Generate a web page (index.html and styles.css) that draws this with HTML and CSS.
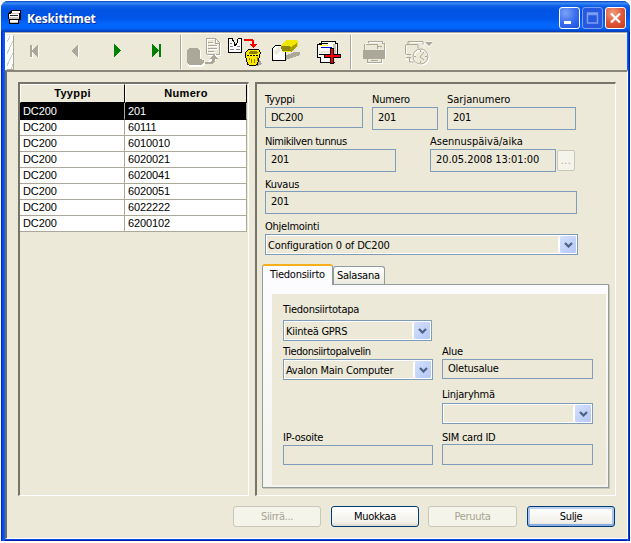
FILE: index.html
```html
<!DOCTYPE html>
<html lang="fi">
<head>
<meta charset="utf-8">
<title>Keskittimet</title>
<link rel="stylesheet" href="styles.css">
</head>
<body>
<div class="window">
  <header class="titlebar">
    <svg class="app-icon" width="14" height="16" viewBox="8 9 14 16" shape-rendering="crispEdges">
      <path d="M11 10h10v10h-2v4h-10v-5h-1v-6h1z" fill="#000"/>
      <path d="M12 11h8v2h-8zM9 14h10v5h-10zM10 20h8v3h-8z" fill="#fff"/>
      <path d="M11 13h8v1h-8zM9 17h10v2h-10zM10 22h8v1h-8z" fill="#c9c5b8"/>
      <path d="M10 15h8v1h-8z" fill="#223"/>
    </svg>
    <h1>Keskittimet</h1>
    <div class="caption-buttons">
      <span class="cap"><svg width="19" height="20"><path d="M4 13h7v3h-7z" fill="#fff"/></svg></span>
      <span class="cap max"><svg width="19" height="20"><path d="M4.500 5h10v10h-10zM4.500 6.500h10" fill="none" stroke="#7d9df2" stroke-width="1.500"/></svg></span>
      <span class="cap close"><svg width="19" height="20"><path d="M5 5.500l9 9M14 5.500l-9 9" stroke="#fff" stroke-width="2.200"/></svg></span>
    </div>
  </header>
  <div class="toolbar">
    <span class="grip"></span>
    <svg class="t-first" width="9" height="13" viewBox="0 0 9 13" shape-rendering="crispEdges"><path d="M1 1h2v12h-2zM9 0v13l-6-6z" fill="#fff"/><path d="M0 0h2v12h-2zM8 -1v14l-7-7z" fill="#aca899"/></svg>
    <svg class="t-prev" width="9" height="13" viewBox="0 0 9 13" shape-rendering="crispEdges"><path d="M8 0v13l-7-6z" fill="#fff"/><path d="M7 -1v14l-7-7z" fill="#aca899"/></svg>
    <svg class="t-next" width="9" height="13" viewBox="0 0 9 13" shape-rendering="crispEdges"><path d="M0 0v13l7-6.500z" fill="#008000"/></svg>
    <svg class="t-last" width="9" height="13" viewBox="0 0 9 13" shape-rendering="crispEdges"><path d="M0 0v13l7-6.500zM7 0h2v13h-2z" fill="#008000"/></svg>
    <span class="sep s1"></span>
    <svg class="t-move" width="36" height="32" viewBox="186 36 36 32" shape-rendering="crispEdges">
      <path d="M188 50l3-2h8l2 2v8l4 1v5l-3 2h-13l-1-2z" fill="#fff"/>
      <path d="M187 49l3-2h7l3 2v9l4 1v3l-3 2h-12l-2-2z" fill="#aca899"/>
      <path d="M207 38h10l4 4v13h-14z" fill="#ece9d8"/>
      <path d="M207.500 54v-15.500h9l4 4v11.500h-13M216.500 38v5h4M209 42.500h5M209 45.500h9M209 48.500h9M209 51.500h6" fill="none" stroke="#fff"/>
      <path d="M206.500 53v-15.500h9l4 4v11.500h-13M215.500 37v5h4M208 41.500h5M208 44.500h9M208 47.500h9M208 50.500h6" fill="none" stroke="#aca899"/>
      <path d="M206 63h6l4-3v-3h3l-4-4z" fill="#fff"/>
      <path d="M205 61h5l2-1v-2h-3l4-4h1l4 4h-3v3l-3 2h-7z" fill="#aca899"/>
    </svg>
    <svg class="t-delete" width="36" height="32" viewBox="227 36 36 32" shape-rendering="crispEdges">
      <path d="M228.500 37.500h4l3 3 3-3h3v14h-13z" fill="#fff" stroke="#000"/>
      <path d="M232 38l2 3 1 4 2-3 1-4" fill="#ece9d8" stroke="#000"/>
      <path d="M230 42.500h2M230 45.500h3M237 45.500h3M230 48.500h4M236 48.500h4" stroke="#888"/>
      <path d="M244 38h8l2 2v3h3l-4 4-4-4h3v-2l-1-1h-7z" fill="#f00"/>
      <path d="M258 56l4 7-4 2h-8z" fill="#aca899"/>
      <path d="M245.500 51.500l3-3h10l2 3-1 3-2 9-3 1h-4l-3-1-2-9z" fill="#ffe800" stroke="#000"/>
      <path d="M248 52l2-2h7l1 2-2 1h-6z" fill="#8a8000"/>
      <path d="M249.500 57v2M251.500 58v4M254.500 58v4M257 56v4" stroke="#8a8000"/>
      <path d="M247 54.500h12" stroke="#000" stroke-dasharray="2 1"/>
    </svg>
    <svg class="t-clear" width="30" height="28" viewBox="271 38 30 28" shape-rendering="crispEdges">
      <path d="M285 55l9-4h6v3l-14 5z" fill="#aca899"/>
      <path d="M272.500 47.500l3-3h5l5 6v9h-13z" fill="#fff" stroke="#000"/>
      <path d="M273 51l6-5h3v2l-6 6z" fill="#ece9d8"/>
      <path d="M286 39h10l2 2v4l-7 6h-8l-2-6z" fill="#f0e600"/>
      <path d="M281 45h9l2 5h-10z" fill="#8f8708"/><path d="M297 42v4l-6 5-1-4z" fill="#a89e00"/>
    </svg>
    <svg class="t-add" width="25" height="25" viewBox="316 39 25 25" shape-rendering="crispEdges">
      <path d="M321 40.500h14l2 2v13l-3 2v4h-14v-5h-3v-11z" fill="#fff"/>
      <path d="M321 41.500v-1h14v2h2v12M317.500 43v13h3v5h14M318 43h3v-2M319 53.500h12M319 42.500h9" fill="none" stroke="#000"/>
      <path d="M333 43h3v11h-3z" fill="#c9c5b8"/><path d="M319 50h12v2h-12z" fill="#ece9d8"/>
      <path d="M320 44h8v1h-8z" fill="#ffff30"/><path d="M321 46h11v1h-11z" fill="#0000e0"/>
      <path d="M330 47h4v6h7v4h-7v6h-4v-6h-6v-4h6z" fill="#000"/><path d="M331 48h2v6h7v2h-7v6h-2v-6h-6v-2h6z" fill="#f00"/>
    </svg>
    <span class="sep s2"></span>
    <svg class="t-print" width="24" height="25" viewBox="362 39 24 25" shape-rendering="crispEdges">
      <path d="M369 41.500h14l2 2v14h-3v5h-15v-6h-3v-12z" fill="#ece9d8" stroke="#fff"/>
      <path d="M368 42v-1.500h14v2h2v14M364.500 43v13M367.500 57v4h14v-4M366 43.500h11v4M371 59.500h7M377 45.500h5" fill="none" stroke="#aca899"/>
      <path d="M363 49h22v9h-22z" fill="#aca899"/>
    </svg>
    <svg class="t-clock" width="30" height="26" viewBox="404 39 30 26">
      <path d="M411 41.500h13v5M406.500 45v14h5v4M425 41h8l-4 5z" fill="none" stroke="#fff"/>
      <path d="M408 43v-2.500h15v3M405.500 44v9M406 43.500h12v4M406 53.500h5M406 56.500h5M409.500 57v4h4" fill="none" stroke="#aca899"/>
      <path d="M425 41h8l-4 4z" fill="#aca899"/>
      <circle cx="421.500" cy="56.500" r="7.500" fill="#ece9d8" stroke="#fff" stroke-width="1.500"/>
      <circle cx="420.500" cy="55.500" r="7.500" fill="none" stroke="#aca899"/>
      <path d="M424 51l-4 5 4 3M414 55.500h2M425 55.500h2M420.500 49v2M420.500 60v2" fill="none" stroke="#aca899"/>
    </svg>
  </div>
  <main class="client">
    <div class="panels">
      <section class="panel list">
        <table>
          <thead><tr><th>Tyyppi</th><th>Numero</th></tr></thead>
          <tbody>
            <tr class="selected"><td>DC200</td><td>201</td></tr>
            <tr><td>DC200</td><td>60111</td></tr>
            <tr><td>DC200</td><td>6010010</td></tr>
            <tr><td>DC200</td><td>6020021</td></tr>
            <tr><td>DC200</td><td>6020041</td></tr>
            <tr><td>DC200</td><td>6020051</td></tr>
            <tr><td>DC200</td><td>6022222</td></tr>
            <tr><td>DC200</td><td>6200102</td></tr>
          </tbody>
        </table>
      </section>
      <section class="panel details">
        <div class="row r1">
          <div class="field w-type"><label>Tyyppi</label><div class="box short">DC200</div></div>
          <div class="field w-num"><label>Numero</label><div class="box">201</div></div>
          <div class="field w-serial"><label class="loose">Sarjanumero</label><div class="box">201</div></div>
        </div>
        <div class="row r2">
          <div class="field w-plate"><label class="tight">Nimikilven tunnus</label><div class="box">201</div></div>
          <div class="field w-date"><label class="loose">Asennuspäivä/aika</label><div class="box wide-text">20.05.2008 13:01:00</div></div>
          <span class="dots">...</span>
        </div>
        <div class="row r3">
          <div class="field w-desc"><label>Kuvaus</label><div class="box">201</div></div>
        </div>
        <div class="row r4">
          <div class="field w-conf"><label>Ohjelmointi</label><div class="combo"><span class="conf">Configuration 0 of DC200</span><i><svg width="9" height="6"><path d="M1 1l3.500 3.500L8 1" /></svg></i></div></div>
        </div>
        <div class="tabs"><span class="tab active">Tiedonsiirto</span><span class="tab">Salasana</span></div>
        <div class="tabpane">
          <div class="sheet">
            <div class="field w-method"><label>Tiedonsiirtotapa</label><div class="combo"><span>Kiinteä GPRS</span><i><svg width="9" height="6"><path d="M1 1l3.500 3.500L8 1" /></svg></i></div></div>
            <div class="row r6">
              <div class="field w-left"><label class="tight">Tiedonsiirtopalvelin</label><div class="combo"><span>Avalon Main Computer</span><i><svg width="9" height="6"><path d="M1 1l3.500 3.500L8 1" /></svg></i></div></div>
              <div class="field w-right"><label>Alue</label><div class="box area">Oletusalue</div></div>
            </div>
            <div class="row r7">
              <div class="field w-right"><label>Linjaryhmä</label><div class="combo"><span></span><i><svg width="9" height="6"><path d="M1 1l3.500 3.500L8 1" /></svg></i></div></div>
            </div>
            <div class="row r8">
              <div class="field w-left"><label>IP-osoite</label><div class="box ip"></div></div>
              <div class="field w-right"><label>SIM card ID</label><div class="box short"></div></div>
            </div>
          </div>
        </div>
      </section>
    </div>
    <footer class="buttons">
      <button disabled>Siirrä...</button>
      <button>Muokkaa</button>
      <button disabled class="b3">Peruuta</button>
      <button class="default">Sulje</button>
    </footer>
  </main>
</div>
</body>
</html>
```
FILE: styles.css
```css
* { box-sizing: border-box; }
body { margin: 0; background: #fff; font: 11px/14px "DejaVu Sans Condensed", "DejaVu Sans", sans-serif; font-stretch: condensed; letter-spacing: -0.25px; color: #000; overflow: hidden; }
svg { display: block; flex: none; }
.window { margin: 1px; width: 629px; height: 540px; background: linear-gradient(90deg, #0023d8 0 1px, #0046e8 1px 2px, #0855f0 2px 3px, #0a5cf5 3px 4px, transparent 4px 626px, #0a5cf5 626px 627px, #0040dc 627px 628px, #001ea0 628px), linear-gradient(#0855dd 0 538px, #0048e0 538px 539px, #0019a8 539px); border-radius: 7px 7px 0 0; }
.titlebar { height: 31px; display: flex; align-items: flex-start; padding: 8px 4px 0 7px; border-radius: 7px 7px 0 0; background: linear-gradient(#0a3fbd 0, #3a8cf8 2px, #0e5fe6 5px, #0054e3 9px, #0055e7 17px, #0366fc 23px, #0366fc 27px, #0450d8 29px, #003ab8 31px); }
h1 { margin: 2px 0 0 5px; font: bold 12px/16px "Open Sans", "DejaVu Sans Condensed", sans-serif; color: #fff; text-shadow: 1px 1px #0a2a90; letter-spacing: -0.15px; }
.caption-buttons { display: flex; gap: 2px; margin: -2px 0 0 auto; }
.cap { width: 21px; height: 22px; border: 1px solid #fff; border-radius: 3px; background: radial-gradient(circle at 30% 25%, #7ea2f6, #3a6ff0 50%, #1c4fe0); }
.cap.max { border-color: #7d9df2; background: #2659e0; }
.cap.close { background: radial-gradient(circle at 35% 25%, #f0a080, #e1573a 50%, #c83c14); }
.toolbar { margin: 0 3px 0 4px; height: 38px; display: flex; align-items: flex-start; background: #ece9d8; border-top: 1px solid #aca899; box-shadow: inset 1px 1px #fff; }
.grip { width: 8px; height: 35px; margin: 2px 0 0 1px; border: 1px solid #fff; border-right-color: #aca899; border-bottom-color: #aca899; background: repeating-linear-gradient(115deg, #fff 0 2px, #c8d0c8 2px 3px, #fff 3px 5px); }
.t-first { margin: 12px 0 0 16px; }
.t-prev { margin: 12px 0 0 32px; }
.t-next { margin: 11px 0 0 34px; }
.t-last { margin: 11px 0 0 29px; }
.t-first, .t-prev { overflow: visible; }
.sep { width: 2px; height: 34px; margin-top: 2px; background: linear-gradient(90deg, #aca899 50%, #fff 50%); }
.s1 { margin-left: 19px; }
.t-move { margin: 4px 0 0 4px; }
.t-delete { margin: 4px 0 0 5px; }
.t-clear { margin: 6px 0 0 8px; }
.t-add { margin: 7px 0 0 15px; }
.s2 { margin-left: 9px; }
.t-print { margin: 7px 0 0 10px; }
.t-clock { margin: 7px 0 0 18px; }
.client { margin: 0 2px 0 4px; height: 469px; background: #ece9d8; border: 2px solid #fff; border-left-color: #6f6c60; border-top-color: #8a867a; border-right-width: 1px; border-bottom-width: 1px; padding: 10px 11px 0 11px; }
.panels { display: flex; justify-content: space-between; height: 414px; }
.panel { border-style: solid; border-width: 2px 1px 1px 2px; border-color: #77746a #fff #fff #77746a; }
.list { width: 231px; }
.details { width: 361px; padding: 8px 0 0 5px; }
table { border-collapse: separate; border-spacing: 0; table-layout: fixed; width: 227px; font: 11px/15px "Liberation Sans", sans-serif; letter-spacing: -0.1px; }
th { padding: 0; height: 19px; font-weight: bold; line-height: 17px; letter-spacing: 0.35px; border: 1px solid #000; border-top-color: #fff; border-left-color: #fff; }
th:first-child { width: 105px; }
td { padding: 0 0 0 3px; height: 16px; line-height: 15px; border-bottom: 1px solid #aca899; border-right: 1px solid #aca899; background: #fff; }
.selected td { height: 17px; padding-top: 1px; background: #000; color: #fff; border-bottom-color: #000; }
.row { display: flex; margin-left: 3px; }
.field label { display: block; height: 14px; line-height: 16px; margin: 0 0 1px; white-space: nowrap; }
.field label.loose { letter-spacing: 0; }
.field label.tight { letter-spacing: -0.45px; }
.box { height: 23px; border: 1px solid #7f9db9; padding: 3px 0 0 5px; white-space: nowrap; }
.box.short { height: 21px; }
.r1 { height: 42px; }
.w-type { width: 98px; }
.w-num { width: 66px; margin-left: 9px; }
.w-serial { width: 129px; margin-left: 9px; }
.r2 { height: 43px; }
.w-plate { width: 131px; }
.w-date { width: 126px; margin-left: 34px; }
.dots { width: 18px; height: 21px; margin: 16px 0 0 1px; border: 1px solid #c9c7ba; border-radius: 2px; background: #f5f4ea; color: #aca899; text-align: center; line-height: 20px; letter-spacing: 0.3px; }
.r3 { height: 42px; }
.w-desc { width: 312px; }
.w-desc label { margin-bottom: 0; }
.w-conf { width: 313px; }
.combo { height: 21px; border: 1px solid #7f9db9; box-shadow: inset 0 0 0 1px #fff; padding: 1px; display: flex; justify-content: space-between; }
.combo span { padding: 3px 0 0 1px; white-space: nowrap; }
.combo .conf { letter-spacing: -0.17px; }
.wide-text { letter-spacing: -0.05px; }
.combo i { width: 17px; height: 17px; border-left: 1px solid #fff; border-radius: 2px; background: linear-gradient(135deg, #d4e0fc, #b4c8f6); display: flex; align-items: center; justify-content: center; box-shadow: -1px 0 #fff; }
.combo path { fill: none; stroke: #4d6185; stroke-width: 2.2; }
.r4 { height: 45px; }
.tabs { display: flex; align-items: flex-end; height: 21px; margin-bottom: -1px; position: relative; }
.tab { height: 18px; width: 52px; padding: 2px 0 0 3px; border: 1px solid #919b9c; border-bottom: 0; border-radius: 3px 3px 0 0; background: linear-gradient(#fff, #ebebe0); margin-bottom: 1px; }
.tab.active { height: 21px; width: 71px; padding: 2px 0 0 7px; border-top: 2px solid #f6b01c; background: #fcfcfe; margin-bottom: 0; }
.tabpane { width: 347px; height: 204px; border: 1px solid #919b9c; box-shadow: 1px 1px #c9c7ba; background: linear-gradient(#fcfcfe, #f4f3ee); padding: 9px 2px 2px 9px; }
.sheet { height: 191px; background: #ece9d8; padding: 8px 0 0 11px; }
.sheet .row { margin-left: 0; justify-content: space-between; width: 310px; }
.w-method { width: 149px; }
.sheet .w-method label { margin-bottom: 4px; }
.w-left { width: 150px; }
.w-right { width: 151px; }
.r6 { height: 43px; margin-top: 3px; }
.box.area { height: 20px; padding-top: 2px; }
.sheet .r7 { height: 42px; justify-content: flex-end; }
.sheet .r7 label { margin-bottom: 2px; }
.r8 { margin-top: 1px; }
.sheet .r8 label { margin-bottom: 0; }
.box.ip { height: 20px; margin-top: 1px; }
.buttons { display: flex; justify-content: flex-end; margin: 10px 1px 0 0; gap: 10px; }
button { width: 88px; height: 21px; padding: 0; font: inherit; letter-spacing: -0.35px; color: #000; border: 1px solid #003c74; border-radius: 3px; background: linear-gradient(#fff, #f2f1ea 80%, #dcd8cc); }
button:disabled { color: #a6a390; border-color: #c9c7ba; background: #f5f4ea; }
.b3 { margin-left: -1px; width: 89px; }
.default { box-shadow: inset 0 -2px #89ade4, inset 0 2px #bcd0f4, inset 2px 0 #a8c4f0, inset -2px 0 #a8c4f0; }
```
